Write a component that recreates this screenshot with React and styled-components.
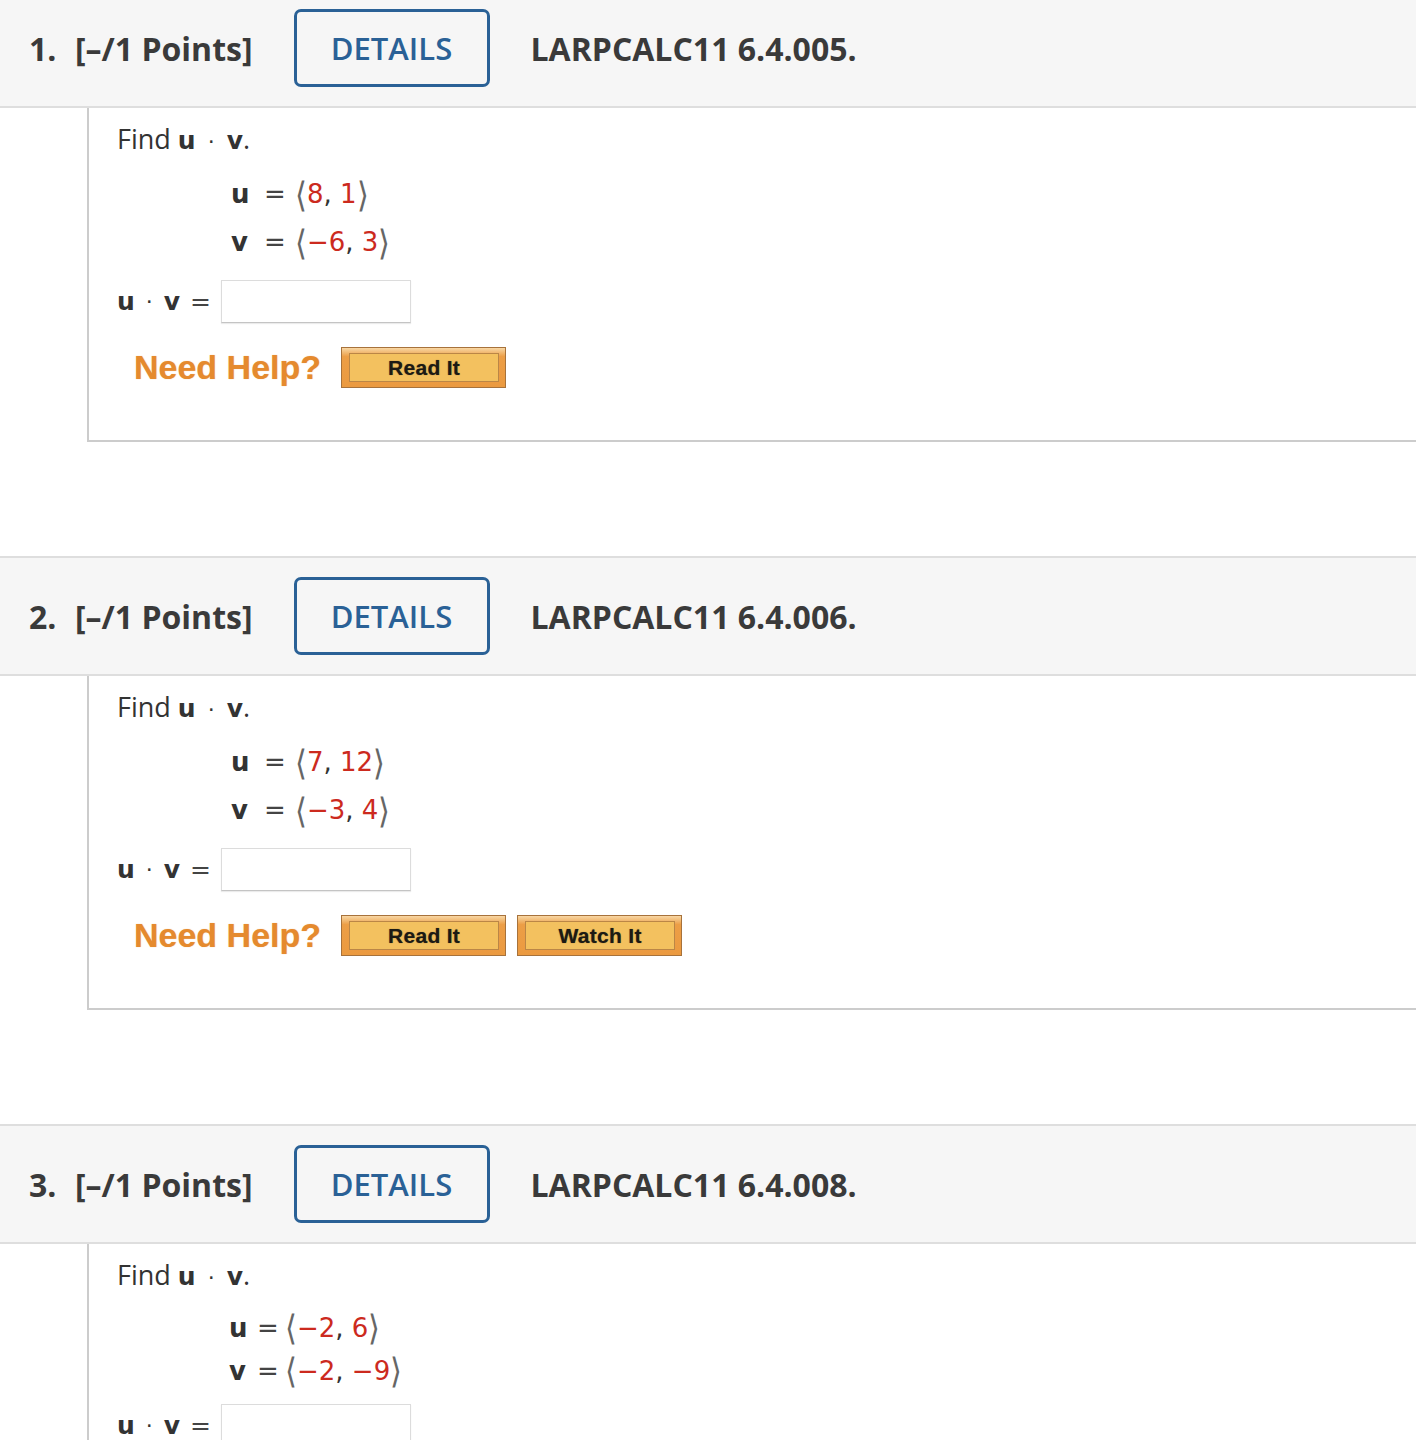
import React from 'react'
import styled, { createGlobalStyle } from 'styled-components'

const GlobalStyle = createGlobalStyle`
    body {
        margin: 0;
        background: #fff;
        font-family: "Open Sans", "Liberation Sans", sans-serif;
        color: #333;
    }
`

const Page = styled.div`
    margin-top: -12px;
    width: 1416px;
    height: 1452px;
    overflow: hidden;
`

const Question = styled.section`
    margin-bottom: 114px;
`

const Header = styled.div`
    display: flex;
    align-items: center;
    height: 116px;
    padding-left: 29px;
    background: #f6f6f6;
    border-top: 2px solid #dedede;
    border-bottom: 2px solid #dedede;
    font-size: 32px;
    font-weight: 700;
    color: #3a3a3a;
`

const Number = styled.span`
    width: 46px;
`

const Points = styled.span``

const DetailsButton = styled.button`
    margin-left: 41px;
    width: 196px;
    height: 78px;
    border: 3px solid #2a6196;
    border-radius: 7px;
    background: transparent;
    color: #2a6196;
    font-family: "Open Sans", sans-serif;
    font-size: 31px;
    font-weight: 600;
    cursor: pointer;
`

const Title = styled.span`
    margin-left: 41px;
`

const Body = styled.div`
    margin-left: 87px;
    height: 334px;
    padding: 13px 0 0 28px;
    box-sizing: border-box;
    border-left: 2px solid #cccccc;
    border-bottom: 2px solid #cccccc;
    font-size: 27px;
    color: #333;
`

const Prompt = styled.div`
    height: 36px;
    line-height: 36px;
`

const Bold = styled.b`
    font-family: "DejaVu Sans", Verdana, sans-serif;
    font-weight: 700;
    font-size: 25px;
`

const Dot = styled.span`
    font-family: "DejaVu Sans", sans-serif;
    font-size: 22px;
    margin: 0 ${p => p.$gap}px;
`

const MathBlock = styled.div`
    margin: ${p => (p.$compact ? '13px 0 0 112px' : '13px 0 0 114px')};
    font-family: "DejaVu Sans", Verdana, sans-serif;
    font-size: 26px;
`

const MathRow = styled.div`
    display: flex;
    align-items: center;
    height: ${p => (p.$compact ? '43px' : '48px')};
`

const Var = styled.span`
    font-weight: 700;
    display: inline-block;
    width: ${p => (p.$compact ? '28px' : '33px')};
`

const Eq = styled.span`
    display: inline-block;
    width: ${p => (p.$compact ? '28px' : '31px')};
    color: #444;
`

const Bracket = styled.span`
    color: #666;
    font-size: 30px;
    font-weight: 300;
    transform: scaleY(1.15);
    display: inline-block;
`

const Red = styled.span`
    color: #cc2a1e;
`

const AnswerRow = styled.div`
    display: flex;
    align-items: center;
    margin-top: ${p => (p.$compact ? '12px' : '14px')};
    font-family: "DejaVu Sans", Verdana, sans-serif;
    font-size: 25px;
`

const EqSign = styled.span`
    margin-left: 10px;
    color: #444;
`

const AnswerInput = styled.input`
    margin-left: 10px;
    width: 190px;
    height: 43px;
    box-sizing: border-box;
    border: 1px solid #dcdcdc;
    border-bottom-color: #c4c4c4;
    box-shadow: 0 1px 1px rgba(0, 0, 0, 0.08);
    outline: none;
`

const HelpRow = styled.div`
    display: flex;
    align-items: center;
    gap: 11px;
    margin: 24px 0 0 17px;
`

const NeedHelp = styled.span`
    font-family: "Liberation Sans", Arial, sans-serif;
    font-size: 34px;
    font-weight: 700;
    color: #e58a2e;
    margin-right: 9px;
    text-shadow: 0 0 1px rgba(229, 138, 46, 0.6);
`

const HelpButton = styled.button`
    width: 165px;
    height: 41px;
    padding: 5px 6px 5px 7px;
    box-sizing: border-box;
    border: 1px solid #a7723b;
    background: linear-gradient(#f8d7a4 0%, #ec9e46 22%, #eb9a40 100%);
    cursor: pointer;
`

const HelpInner = styled.span`
    display: flex;
    align-items: center;
    justify-content: center;
    height: 100%;
    box-sizing: border-box;
    border: 1px solid #bb8646;
    background: #f3c15f;
    font-family: "Liberation Sans", Arial, sans-serif;
    font-size: 21px;
    font-weight: 700;
    letter-spacing: 0.3px;
    color: #1c1a14;
    text-shadow: 0 0 1px rgba(0, 0, 0, 0.5);
`

const questions = [
    {
        n: 1,
        code: '6.4.005.',
        u: ['8', '1'],
        v: ['\u22126', '3'],
        buttons: ['Read It'],
    },
    {
        n: 2,
        code: '6.4.006.',
        u: ['7', '12'],
        v: ['\u22123', '4'],
        buttons: ['Read It', 'Watch It'],
    },
    {
        n: 3,
        code: '6.4.008.',
        u: ['\u22122', '6'],
        v: ['\u22122', '\u22129'],
        buttons: ['Read It'],
        compact: true,
    },
]

const Vector = ({ name, values, compact }) => (
    <MathRow $compact={compact}>
        <Var $compact={compact}>{name}</Var>
        <Eq $compact={compact}>=</Eq>
        <Bracket>{'\u27E8'}</Bracket>
        <Red>{values[0]}</Red>
        <span>,&nbsp;</span>
        <Red>{values[1]}</Red>
        <Bracket>{'\u27E9'}</Bracket>
    </MathRow>
)

const App = () => {
    return (
        <Page>
            <GlobalStyle />
            {questions.map(q => (
                <Question key={q.n}>
                    <Header>
                        <Number>{q.n}.</Number>
                        <Points>[–/1 Points]</Points>
                        <DetailsButton>DETAILS</DetailsButton>
                        <Title>LARPCALC11 {q.code}</Title>
                    </Header>
                    <Body>
                        <Prompt>
                            Find <Bold>u</Bold>
                            <Dot $gap={12}>·</Dot>
                            <Bold>v</Bold>.
                        </Prompt>
                        <MathBlock $compact={q.compact}>
                            <Vector name="u" values={q.u} compact={q.compact} />
                            <Vector name="v" values={q.v} compact={q.compact} />
                        </MathBlock>
                        <AnswerRow $compact={q.compact}>
                            <Bold>u</Bold>
                            <Dot $gap={11}>·</Dot>
                            <Bold>v</Bold>
                            <EqSign>=</EqSign>
                            <AnswerInput type="text" />
                        </AnswerRow>
                        <HelpRow>
                            <NeedHelp>Need Help?</NeedHelp>
                            {q.buttons.map(b => (
                                <HelpButton key={b}>
                                    <HelpInner>{b}</HelpInner>
                                </HelpButton>
                            ))}
                        </HelpRow>
                    </Body>
                </Question>
            ))}
        </Page>
    )
}

export default App
